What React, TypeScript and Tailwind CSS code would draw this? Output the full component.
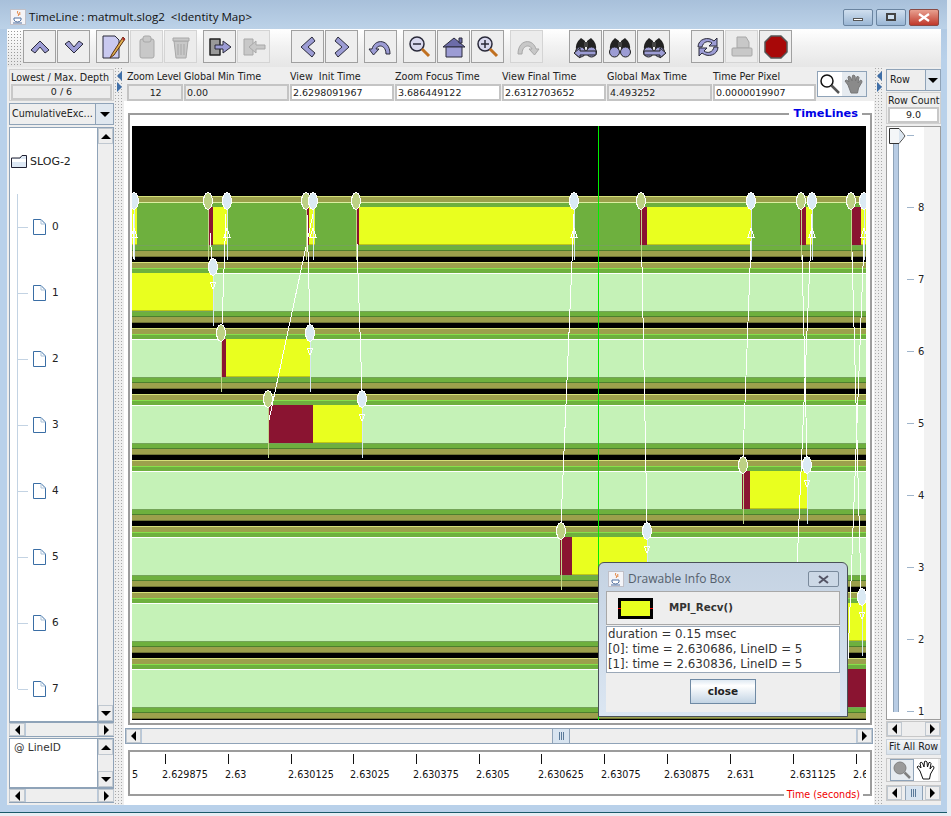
import type { ReactNode } from "react";

const ROW_TOPS = [196, 262, 328, 394, 460, 526, 592, 658];
const RED = "#8a1431";
const YELLOW = "#e9ff1f";

type Seg = { x: number; w: number; c: string };
const segs: Seg[][] = [
  [
    { x: 132, w: 5, c: YELLOW },
    { x: 209, w: 4, c: RED },
    { x: 213, w: 15, c: YELLOW },
    { x: 307, w: 2, c: RED },
    { x: 309, w: 6, c: YELLOW },
    { x: 357, w: 2, c: RED },
    { x: 359, w: 215, c: YELLOW },
    { x: 640, w: 7, c: RED },
    { x: 647, w: 105, c: YELLOW },
    { x: 800, w: 6, c: RED },
    { x: 806, w: 6, c: YELLOW },
    { x: 851, w: 10, c: RED },
    { x: 861, w: 5, c: YELLOW },
  ],
  [{ x: 132, w: 81, c: YELLOW }],
  [
    { x: 221, w: 5, c: RED },
    { x: 226, w: 85, c: YELLOW },
  ],
  [
    { x: 269, w: 44, c: RED },
    { x: 313, w: 49, c: YELLOW },
  ],
  [
    { x: 742, w: 8, c: RED },
    { x: 750, w: 57, c: YELLOW },
  ],
  [
    { x: 560, w: 12, c: RED },
    { x: 572, w: 76, c: YELLOW },
  ],
  [{ x: 848, w: 18, c: YELLOW }],
  [{ x: 848, w: 18, c: RED }],
];

// [row, x, is start (olive) balloon]
const balloons: [number, number, boolean][] = [
  [0, 134, false],
  [0, 208, true],
  [0, 227, false],
  [0, 306, true],
  [0, 313, false],
  [0, 356, true],
  [0, 574, false],
  [0, 641, true],
  [0, 751, false],
  [0, 801, true],
  [0, 812, false],
  [0, 851, true],
  [0, 864, false],
  [1, 213, false],
  [2, 221, true],
  [2, 310, false],
  [3, 268, true],
  [3, 362, false],
  [4, 743, true],
  [4, 807, false],
  [5, 561, true],
  [5, 647, false],
  [6, 862, false],
];

const messages: [number, number, number, number][] = [
  [133, 214, 133, 259],
  [210, 233, 212, 260],
  [226, 214, 222, 325],
  [307, 214, 310, 325],
  [313, 214, 269, 420],
  [356, 214, 362, 391],
  [574, 214, 561, 523],
  [641, 214, 647, 523],
  [752, 214, 743, 457],
  [801, 214, 807, 457],
  [812, 214, 796, 590],
  [851, 214, 861, 590],
  [865, 214, 848, 660],
];

const ticks = [
  [165, "2.629875"],
  [228, "2.63"],
  [291, "2.630125"],
  [353, "2.63025"],
  [416, "2.630375"],
  [479, "2.6305"],
  [541, "2.630625"],
  [604, "2.63075"],
  [667, "2.630875"],
  [730, "2.631"],
  [793, "2.631125"],
  [856, "2.63"],
] as const;

function Timeline() {
  return (
    <svg width={734} height={594} viewBox="132 126 734 594" className="block" shapeRendering="crispEdges">
      <rect x={132} y={126} width={734} height={594} fill="#000" />
      {ROW_TOPS.map((t, i) => (
        <g key={t}>
          <rect x={132} y={t} width={734} height={1} fill="#d5e07a" />
          <rect x={132} y={t + 1} width={734} height={5} fill="#9ca04c" />
          <rect x={132} y={t + 6} width={734} height={1} fill={i === 0 ? "#dcefa0" : "#86e04a"} />
          <rect x={132} y={t + 7} width={734} height={47} fill="#6eb03e" />
          {i > 0 && <rect x={132} y={t + 11} width={734} height={1} fill="#fff" />}
          {i > 0 && <rect x={132} y={t + 12} width={734} height={37} fill="#c5f2b7" />}
          <rect x={132} y={t + 49} width={734} height={1} fill="#74a458" />
          <rect x={132} y={t + 54} width={734} height={1} fill="#4d7f2e" />
          <rect x={132} y={t + 55} width={734} height={5} fill="#9ca04c" />
          <rect x={132} y={t + 60} width={734} height={1} fill="#6f7436" />
          {segs[i].map((s) => (
            <g key={s.x}>
              <rect x={s.x} y={t + 11} width={s.w} height={38} fill={s.c} />
              {s.c === YELLOW && <rect x={s.x} y={t + 48} width={s.w} height={1} fill="#bcc814" />}
            </g>
          ))}
        </g>
      ))}
      {messages.map(([x1, y1, x2, y2]) => (
        <line key={`${x1}-${y1}`} x1={x1} y1={y1} x2={x2} y2={y2} stroke="#fff" strokeWidth={1} />
      ))}
      {balloons.map(([row, x, olive]) => {
        const t = ROW_TOPS[row];
        const up = row === 0;
        return (
          <g key={`${row}-${x}`}>
            <line x1={x} y1={t + 12} x2={x} y2={t + 64} stroke={olive ? "#c3d68c" : "#d6e8f2"} strokeWidth={1} />
            <ellipse cx={x} cy={t + 5} rx={4.4} ry={8.4} fill={olive ? "#bdd184" : "#dbeaf4"} stroke="#fff" strokeWidth={1} />
            {!olive &&
              (up ? (
                <polygon points={`${x},${t + 32} ${x - 3},${t + 41} ${x + 3},${t + 41}`} fill="none" stroke="#fff" strokeWidth={1} />
              ) : (
                <polygon points={`${x - 3},${t + 20} ${x + 3},${t + 20} ${x},${t + 27}`} fill="none" stroke="#fff" strokeWidth={1} />
              ))}
          </g>
        );
      })}
      <rect x={598} y={126} width={1} height={594} fill="#00ee00" />
    </svg>
  );
}

function Tri({ dir, className = "fill-black" }: { dir: "up" | "down" | "left" | "right"; className?: string }) {
  const pts = {
    up: "0,6 5,1 10,6",
    down: "0,1 5,6 10,1",
    left: "6,0 1,5 6,10",
    right: "1,0 6,5 1,10",
  }[dir];
  const horizontal = dir === "left" || dir === "right";
  return (
    <svg width={horizontal ? 7 : 10} height={horizontal ? 10 : 7} viewBox={horizontal ? "0 0 7 10" : "0 0 10 7"} className={className}>
      <polygon points={pts} />
    </svg>
  );
}

function ArrowBtn({ dir, className = "" }: { dir: "up" | "down" | "left" | "right"; className?: string }) {
  return (
    <div className={`flex shrink-0 items-center justify-center border border-[#c0c8d0] bg-[#eeeeee] ${className}`}>
      <Tri dir={dir} />
    </div>
  );
}

function HScroll({ className = "" }: { className?: string }) {
  return (
    <div className={`flex h-[15px] shrink-0 border-y border-[#8fa3b8] bg-[#eeeeee] ${className}`}>
      <ArrowBtn dir="left" className="w-[16px]" />
      <div className="flex-1 border-x border-[#b8c8da] bg-[#eeeeee]" />
      <ArrowBtn dir="right" className="w-[16px]" />
    </div>
  );
}

function VScroll({ className = "" }: { className?: string }) {
  return (
    <div className={`flex w-[16px] shrink-0 flex-col border-l border-[#8fa3b8] bg-[#eeeeee] ${className}`}>
      <ArrowBtn dir="up" className="h-[16px]" />
      <div className="flex-1" />
      <ArrowBtn dir="down" className="h-[16px]" />
    </div>
  );
}

const Splitter = ({ children }: { children?: ReactNode }) => (
  <div className="relative w-[10px] shrink-0 bg-[radial-gradient(circle,#a8a8a8_0.6px,transparent_0.9px)] bg-[length:3px_3px]">
    {children}
  </div>
);

function Field({ label, value, w, editable }: { label: string; value: string; w: string; editable?: boolean }) {
  return (
    <div className={`flex shrink-0 flex-col ${w}`}>
      <div className="h-[15px] whitespace-pre text-left text-[9.6px] leading-[16px] text-[#222]">{label}</div>
      <div className={`h-[17px] border-2 border-[#c4c4c4] pl-[1px] text-[9.5px] leading-[13px] text-[#222] ${editable ? "bg-white" : "bg-[#ececec]"}`}>
        {value}
      </div>
    </div>
  );
}

function ToolBtn({ children, off }: { children: ReactNode; off?: boolean }) {
  return (
    <div className={`flex h-[33px] w-[33px] shrink-0 items-center justify-center border ${off ? "border-[#d4d4d4] bg-[#ececec]" : "border-[#a0a0a0] bg-[#eeeeee]"}`}>
      <svg width={26} height={26} viewBox="0 0 26 26" strokeLinejoin="round">
        {children}
      </svg>
    </div>
  );
}

const INK = "#2a2a3a";
const LAV = "#9c9cd4";
const G1 = "#c8c8c8";
const G2 = "#a8a8a8";

function Binocular({ arrow }: { arrow?: "left" | "right" }) {
  return (
    <>
      <path d="M8 4 L12 7 V16 H3 Q2 9 8 4Z M18 4 L14 7 V16 H23 Q24 9 18 4Z" fill="#222" />
      <rect x={11} y={8} width={4} height={5} fill="#444" />
      <circle cx={7.5} cy={18} r={5} fill={LAV} stroke="#222" strokeWidth={1} />
      <circle cx={18.5} cy={18} r={5} fill={LAV} stroke="#222" strokeWidth={1} />
      {arrow === "left" && <path d="M1 19 L7 14 V17 H23 V21 H7 V24Z" fill={LAV} stroke="#222" strokeWidth={1} />}
      {arrow === "right" && <path d="M25 19 L19 14 V17 H3 V21 H19 V24Z" fill={LAV} stroke="#222" strokeWidth={1} />}
    </>
  );
}

function Toolbar() {
  return (
    <div className="flex h-[38px] shrink-0 items-start bg-[linear-gradient(#ffffff,#f2f2f2_45%,#e6e6e6)] pr-[4px] pt-[1px]">
      <div className="h-full w-[16px] shrink-0 bg-[radial-gradient(circle,#9a9a9a_0.6px,transparent_0.9px)] bg-[length:3px_3px]" />
      <div className="flex gap-[1px]">
        <ToolBtn><path d="M4 16 L13 7 L22 16 L18 19 L13 13 L8 19Z" fill={LAV} stroke={INK} /></ToolBtn>
        <ToolBtn><path d="M4 10 L8 7 L13 13 L18 7 L22 10 L13 19Z" fill={LAV} stroke={INK} /></ToolBtn>
      </div>
      <div className="ml-[6px] flex gap-[1px]">
        <ToolBtn>
          <path d="M3 2 H15 L19 6 V24 H3Z" fill="#c9c9f0" stroke={INK} />
          <path d="M23 3 L12 20 L10 24 L14 21 L25 5Z" fill="#e0b050" stroke="#5a3010" />
          <path d="M23 3 L25 5 L24 7 L22 5Z" fill="#b03030" />
        </ToolBtn>
        <ToolBtn off>
          <rect x={6} y={5} width={14} height={19} rx={2} fill={G1} stroke={G2} />
          <rect x={9} y={2} width={8} height={6} rx={2} fill={G1} stroke={G2} />
        </ToolBtn>
        <ToolBtn off>
          <path d="M6 7 H20 L18 24 H8Z" fill={G1} stroke={G2} />
          <rect x={5} y={4} width={16} height={3} fill={G1} stroke={G2} />
          <path d="M10 10 V21 M13 10 V21 M16 10 V21" stroke={G2} />
        </ToolBtn>
      </div>
      <div className="ml-[6px] flex gap-[1px]">
        <ToolBtn>
          <path d="M3 5 H13 V21 H3Z" fill="#999" stroke="#222" strokeWidth={1.5} />
          <path d="M8 11 H16 V7 L24 13 L16 19 V15 H8Z" fill={LAV} stroke={INK} />
        </ToolBtn>
        <ToolBtn off>
          <path d="M3 5 H12 V21 H3Z" fill={G1} stroke={G2} />
          <path d="M24 11 H15 V7 L8 13 L15 19 V15 H24Z" fill={G1} stroke={G2} />
        </ToolBtn>
      </div>
      <div className="ml-[21px] flex gap-[1px]">
        <ToolBtn><path d="M17 3 L20 7 L13 13 L20 19 L17 23 L6 13Z" fill={LAV} stroke={INK} /></ToolBtn>
        <ToolBtn><path d="M9 3 L6 7 L13 13 L6 19 L9 23 L20 13Z" fill={LAV} stroke={INK} /></ToolBtn>
      </div>
      <div className="ml-[6px]">
        <ToolBtn>
          <path d="M22 20 H18 C18 11 10 10 8 15 H11 L5.5 21 L1 15 H4 C7 4 22 5 22 20Z" fill={LAV} stroke={INK} />
        </ToolBtn>
      </div>
      <div className="ml-[6px] flex gap-[1px]">
        <ToolBtn>
          <circle cx={10} cy={10} r={7} fill="#d8d8ee" stroke={INK} strokeWidth={1.5} />
          <path d="M6 10 H14" stroke={INK} strokeWidth={1.5} />
          <path d="M15 15 L22 22" stroke="#c07020" strokeWidth={3} />
        </ToolBtn>
        <ToolBtn>
          <path d="M2 13 L13 4 L24 13Z" fill="#6c6ca8" stroke={INK} />
          <rect x={18} y={4} width={3} height={5} fill="#6c6ca8" stroke={INK} />
          <rect x={5} y={13} width={16} height={10} fill={LAV} stroke={INK} />
        </ToolBtn>
        <ToolBtn>
          <circle cx={10} cy={10} r={7} fill="#d8d8ee" stroke={INK} strokeWidth={1.5} />
          <path d="M6 10 H14 M10 6 V14" stroke={INK} strokeWidth={1.5} />
          <path d="M15 15 L22 22" stroke="#c07020" strokeWidth={3} />
        </ToolBtn>
      </div>
      <div className="ml-[6px]">
        <ToolBtn off>
          <path d="M4 20 H8 C8 11 16 10 18 15 H15 L20.5 21 L25 15 H22 C19 4 4 5 4 20Z" fill={G1} stroke={G2} />
        </ToolBtn>
      </div>
      <div className="ml-[26px] flex gap-[1px]">
        <ToolBtn><Binocular arrow="left" /></ToolBtn>
        <ToolBtn><Binocular /></ToolBtn>
        <ToolBtn><Binocular arrow="right" /></ToolBtn>
      </div>
      <div className="ml-[21px] flex gap-[1px]">
        <ToolBtn>
          <path d="M3 13 C3 5 13 2 19 7 L22 4 V12 H14 L17 9 C13 6 8 8 7 13Z" fill={LAV} stroke={INK} />
          <path d="M23 13 C23 21 13 24 7 19 L4 22 V14 H12 L9 17 C13 20 18 18 19 13Z" fill={LAV} stroke={INK} />
        </ToolBtn>
        <ToolBtn off>
          <path d="M8 3 H17 L20 8 V14 H8Z" fill={G1} stroke={G2} />
          <rect x={3} y={14} width={20} height={8} rx={1} fill={G1} stroke={G2} />
        </ToolBtn>
        <ToolBtn>
          <polygon points="8,2 18,2 24,8 24,18 18,24 8,24 2,18 2,8" fill="#a80808" stroke="#555" strokeWidth={1.5} />
        </ToolBtn>
      </div>
    </div>
  );
}

function FileIcon() {
  return (
    <svg width={13} height={16} viewBox="0 0 13 16" className="shrink-0">
      <path d="M0.5 0.5 H8 L12.5 5 V15.5 H0.5Z" fill="#fff" stroke="#3a6ea5" />
      <path d="M8 0.5 V5 H12.5" fill="none" stroke="#a8c0d8" />
    </svg>
  );
}

function LeftColumn() {
  return (
    <div className="flex w-[107px] shrink-0 flex-col pl-[2px] pt-[2px]">
      <div className="h-[32px] border border-[#d0d0d0] px-[1px]">
        <div className="h-[14px] whitespace-nowrap text-[9.6px] leading-[15px] text-[#222]">Lowest / Max. Depth</div>
        <div className="h-[16px] border-2 border-[#c8c8c8] bg-[#ececec] text-center text-[9.5px] leading-[12px] text-[#222]">0 / 6</div>
      </div>
      <div className="mt-[2px] flex h-[22px] border border-[#8fa3b8]">
        <div className="flex-1 bg-[#eeeeee] pl-[2px] text-[9.6px] leading-[20px] text-[#222]">CumulativeExc...</div>
        <div className="flex w-[18px] items-center justify-center border-l border-[#8fa3b8] bg-[#dfe7ef]"><Tri dir="down" /></div>
      </div>
      <div className="mt-[2px] flex h-[595px] border border-[#8fa3b8] bg-white">
        <div className="min-w-0 flex-1">
          <div className="flex h-[66px] items-center gap-[3px] pl-[1px]">
            <svg width={16} height={13} viewBox="0 0 16 13" className="shrink-0">
              <path d="M0.5 3 H9 L11 0.5 H15.5 V12.5 H0.5Z" fill="#dde8f4" stroke="#223" />
              <rect x={1} y={4} width={14} height={3} fill="#fff" />
            </svg>
            <span className="text-[11px] leading-[13px] text-[#222]">SLOG-2</span>
          </div>
          <div className="ml-[7px] h-[495px] border-l border-[#c3d3e3]">
            {[0, 1, 2, 3, 4, 5, 6, 7].map((n) => (
              <div key={n} className="flex h-[66px] items-center">
                <div className="w-[10px] border-t border-[#c3d3e3]" />
                <div className="ml-[5px]"><FileIcon /></div>
                <span className="ml-[6px] text-[10.5px] text-[#222]">{n}</span>
              </div>
            ))}
          </div>
        </div>
        <VScroll />
      </div>
      <HScroll />
      <div className="mt-[1px] flex h-[50px] border border-[#8fa3b8] bg-white">
        <div className="min-w-0 flex-1 pl-[4px] pt-[1px] text-[10.5px] text-[#333]">@ LineID</div>
        <VScroll />
      </div>
      <HScroll />
    </div>
  );
}

function ToggleGlass() {
  return (
    <svg width={22} height={22} viewBox="0 0 22 22">
      <circle cx={8} cy={8} r={6} fill="#fff" stroke="#111" strokeWidth={1.5} />
      <path d="M12.5 12.5 L20 20" stroke="#555" strokeWidth={2.5} />
    </svg>
  );
}

function Hand({ fill, stroke }: { fill: string; stroke: string }) {
  return (
    <svg width={22} height={22} viewBox="0 0 22 22">
      <path
        d="M5 12 L2 8 Q3 6 5 8 L6 9 L5 4 Q6 2.5 7.5 4 L9 8 L9.5 2.5 Q11 1.5 12 3 L12.5 8 L14 3.5 Q15.5 3 16 4.5 L15 10 L17.5 7 Q19 7 19 9 L15.5 15 L14.5 20 H8 Z"
        fill={fill}
        stroke={stroke}
        strokeWidth={1}
      />
    </svg>
  );
}

function MiddleColumn() {
  return (
    <div className="flex w-[750px] shrink-0 flex-col">
      <div className="flex h-[34px] items-start gap-[1px] pl-[3px] pt-[2px]">
        <Field label="Zoom Level" value="12" w="w-[56px] text-center tracking-[-0.2px]" />
        <Field label="Global Min Time" value="0.00" w="w-[105px]" />
        <Field label="View  Init Time" value="2.6298091967" w="w-[104px]" editable />
        <Field label="Zoom Focus Time" value="3.686449122" w="w-[106px]" editable />
        <Field label="View Final Time" value="2.6312703652" w="w-[104px]" editable />
        <Field label="Global Max Time" value="4.493252" w="w-[105px]" />
        <Field label="Time Per Pixel" value="0.0000019907" w="w-[103px]" editable />
        <div className="mt-[2px] flex h-[26px] w-[50px] shrink-0 border border-[#8fa3b8]">
          <div className="flex flex-1 items-center justify-center bg-white"><ToggleGlass /></div>
          <div className="flex flex-1 items-center justify-center bg-[#e6ebf0]"><Hand fill="#8a8a8a" stroke="#777" /></div>
        </div>
      </div>
      <div className="flex flex-1 flex-col bg-white pl-[1px]">
        <div className="relative ml-[3px] mt-[12px] h-[612px] w-[744px] border-2 border-[#9c9c9c] pl-[2px] pt-[11px]">
          <Timeline />
          <div className="absolute -top-[9px] right-[8px] bg-white px-[4px] text-[11.3px] font-bold leading-[16px] text-[#0000e6]">TimeLines</div>
        </div>
        <div className="mt-[3px] flex h-[16px] w-[748px] border border-[#8fa3b8] bg-[#eeeeee]">
          <ArrowBtn dir="left" className="w-[15px]" />
          <div className="flex flex-1 border-x border-[#b8c8da] pl-[410px]">
            <div className="flex h-full w-[18px] items-center justify-center gap-[1px] border-x border-[#8fa3b8] bg-[#d8e4f0]">
              <span className="h-[8px] w-px bg-[#5a7a9a]" />
              <span className="h-[8px] w-px bg-[#5a7a9a]" />
              <span className="h-[8px] w-px bg-[#5a7a9a]" />
            </div>
          </div>
          <ArrowBtn dir="right" className="w-[15px]" />
        </div>
        <div className="relative ml-[3px] mt-[6px] h-[46px] w-[744px] border-2 border-[#9c9c9c]">
          <svg width={734} height={42} viewBox="132 752 734 42" className="ml-[2px] block">
            <text x={132} y={778} fontSize={9.6} fill="#111">5</text>
            {ticks.map(([x, label]) => (
              <g key={x}>
                <rect x={x} y={754} width={1} height={10} fill="#111" />
                <text x={x - 3} y={778} fontSize={9.6} fill="#111">{label}</text>
              </g>
            ))}
          </svg>
          <div className="absolute -bottom-[8px] right-[7px] bg-white px-[3px] text-[9.6px] leading-[15px] text-[#f00000]">Time (seconds)</div>
        </div>
      </div>
    </div>
  );
}

function RightColumn() {
  const labels = ["", "8", "7", "6", "5", "4", "3", "2", "1"];
  return (
    <div className="flex w-[57px] shrink-0 flex-col pl-[2px] pt-[2px]">
      <div className="flex h-[22px] border border-[#8fa3b8]">
        <div className="flex-1 bg-[#eeeeee] pl-[3px] text-[9.6px] leading-[20px] text-[#222]">Row</div>
        <div className="flex w-[15px] items-center justify-center border-l border-[#8fa3b8] bg-[#dfe7ef]"><Tri dir="down" /></div>
      </div>
      <div className="mt-[1px] h-[32px] border border-[#d0d0d0] px-[1px]">
        <div className="h-[14px] whitespace-nowrap text-[9.6px] leading-[15px] text-[#222]">Row Count</div>
        <div className="h-[16px] border-2 border-[#c8c8c8] bg-white text-center text-[9.5px] leading-[12px] text-[#222]">9.0</div>
      </div>
      <div className="relative mt-[2px] flex h-[594px] border border-[#9c9c9c] bg-[linear-gradient(to_right,#ffffff_37px,#f2f2f2_37px)]">
        <div className="ml-[6px] mt-[9px] mb-[7px] w-[6px] border-x border-[#8fa3b8] bg-[#b8cce4]" />
        <div className="ml-[8px] flex h-full flex-1 flex-col justify-between pb-[8px] pt-[8px]">
          {labels.map((l, i) => (
            <div key={i} className="flex h-0 items-center gap-[4px]">
              <span className="h-px w-[7px] bg-[#9fb4ca]" />
              <span className="text-[10px] text-[#222]">{l}</span>
            </div>
          ))}
        </div>
        <svg width={17} height={16} viewBox="0 0 17 16" className="absolute left-[2px] top-[1px]">
          <path d="M0.5 0.5 H10 L16 8 L10 15.5 H0.5Z" fill="#f4f6f8" stroke="#333" />
          <path d="M10 1 L15.5 8 L10 15Z" fill="#dce6f0" />
        </svg>
      </div>
      <div className="mt-[1px] flex h-[16px] border border-[#c8c8c8] bg-[#eeeeee]">
        <ArrowBtn dir="left" className="w-[15px]" />
        <div className="flex-1" />
        <ArrowBtn dir="right" className="w-[15px]" />
      </div>
      <div className="mt-[2px] h-[16px] overflow-hidden whitespace-nowrap border border-[#c8d0d8] bg-[linear-gradient(#f4f6f8,#d8e2ec)] pl-[2px] text-[9.6px] leading-[14px] text-[#222]">Fit All Row</div>
      <div className="mt-[3px] flex h-[24px] justify-center border border-[#c8c8c8]">
        <div className="flex w-[24px] items-center justify-center border border-[#8fa3b8] bg-[#e6ebf0]">
          <svg width={20} height={20} viewBox="0 0 20 20">
            <circle cx={8} cy={8} r={6} fill="#9a9a9a" stroke="#808080" />
            <path d="M12.5 12.5 L18 18" stroke="#808080" strokeWidth={2.5} />
          </svg>
        </div>
        <div className="flex w-[24px] items-center justify-center bg-white"><Hand fill="#fff" stroke="#111" /></div>
      </div>
      <div className="mt-[3px] flex h-[16px] border border-[#c8c8c8] bg-[#eeeeee]">
        <ArrowBtn dir="left" className="w-[15px]" />
        <div className="flex flex-1 justify-center">
          <div className="flex h-full w-[18px] items-center justify-center gap-[1px] border-x border-[#8fa3b8] bg-[#d8e4f0]">
            <span className="h-[8px] w-px bg-[#5a7a9a]" />
            <span className="h-[8px] w-px bg-[#5a7a9a]" />
            <span className="h-[8px] w-px bg-[#5a7a9a]" />
          </div>
        </div>
        <ArrowBtn dir="right" className="w-[15px]" />
      </div>
    </div>
  );
}

function CoffeeIcon() {
  return (
    <svg width={16} height={16} viewBox="0 0 16 16" className="shrink-0">
      <rect x={0.5} y={0.5} width={15} height={15} fill="#f4f4f8" stroke="#c0c0c8" />
      <path d="M8 2 C6 4 10 5 8 7 M10 3 C9 4 10.5 5 9.5 6" stroke="#e07020" fill="none" />
      <path d="M4 9 H11 V11 Q10 13 7.5 13 Q5 13 4 11Z" fill="#fff" stroke="#5070a0" />
      <path d="M3 14 H12" stroke="#5070a0" />
    </svg>
  );
}

function InfoBox() {
  return (
    <div className="absolute left-[598px] top-[562px] flex h-[155px] w-[250px] flex-col rounded-t-[6px] border border-[#4a5058] bg-[linear-gradient(#c4d2e2,#dbe6f2)] px-[7px]">
      <div className="flex h-[28px] shrink-0 items-center gap-[4px] pl-[2px] pt-[4px]">
        <CoffeeIcon />
        <span className="flex-1 font-['Open_Sans',sans-serif] text-[12px] text-[#55606c]">Drawable Info Box</span>
        <div className="mr-[1px] flex h-[16px] w-[31px] items-center justify-center rounded-[2px] border border-[#7a8a9c] bg-[#ccd8e6]">
          <svg width={11} height={9} viewBox="0 0 11 9"><path d="M1 1 L10 8 M10 1 L1 8" stroke="#556" strokeWidth={2} /></svg>
        </div>
      </div>
      <div className="flex flex-1 flex-col bg-[#eeeeee]">
        <div className="flex h-[34px] shrink-0 items-center border border-[#a8a8a8] pl-[11px]">
          <div className="relative h-[21px] w-[35px] border-[3px] border-black bg-[#e9ff1f]">
            <span className="absolute -left-[3px] top-[7px] h-px w-[3px] bg-[#f00000]" />
            <span className="absolute -right-[3px] top-[7px] h-px w-[3px] bg-[#f00000]" />
          </div>
          <span className="ml-[16px] text-[10.3px] font-bold text-[#333]">MPI_Recv()</span>
        </div>
        <div className="mt-[1px] h-[47px] shrink-0 border border-[#9aa8b8] bg-white pl-[1px] text-[11.8px] leading-[15px] text-[#333]">
          <div>duration = 0.15 msec</div>
          <div>[0]: time = 2.630686, LineID = 5</div>
          <div>[1]: time = 2.630836, LineID = 5</div>
        </div>
        <div className="flex flex-1 items-start justify-center pt-[6px]">
          <div className="h-[25px] w-[66px] border border-[#6f8aa4] bg-[linear-gradient(#dfe9f2,#ffffff_25%,#c3d4e4)] text-center text-[10.5px] font-bold leading-[23px] text-[#222]">close</div>
        </div>
      </div>
      <div className="h-[4px] shrink-0" />
    </div>
  );
}

export default function App() {
  return (
    <div className="relative h-[816px] w-[951px] overflow-hidden bg-[#e8eef4] font-['DejaVu_Sans',sans-serif]">
      <div className="flex h-[813px] w-[947px] flex-col rounded-t-[7px] border-b border-[#1a5a6a] bg-[linear-gradient(#a9c3de,#b9d1ea_60px)]">
        <div className="flex h-[29px] shrink-0 items-center bg-[linear-gradient(#a8c0da,#bcd2e8)] pl-[10px] pt-[5px]">
          <CoffeeIcon />
          <span className="ml-[3px] flex-1 whitespace-pre font-['Open_Sans',sans-serif] text-[11.6px] text-[#111]">TimeLine : matmult.slog2  &lt;Identity Map&gt;</span>
          <div className="mr-[8px] flex gap-[3px]">
            <div className="flex h-[17px] w-[30px] items-end justify-center rounded-[2px] border border-[#6a84a0] bg-[linear-gradient(#d0dfef,#9ab6d4)] pb-[4px]"><span className="h-[3px] w-[10px] border border-[#555] bg-white" /></div>
            <div className="flex h-[17px] w-[30px] items-center justify-center rounded-[2px] border border-[#6a84a0] bg-[linear-gradient(#d0dfef,#9ab6d4)]"><span className="h-[8px] w-[10px] border-2 border-[#444] bg-[#cfe0f0]" /></div>
            <div className="flex h-[17px] w-[30px] items-center justify-center rounded-[2px] border border-[#8a4a44] bg-[linear-gradient(#e8a090,#c0392b)]">
              <svg width={12} height={9} viewBox="0 0 12 9"><path d="M1 1 L11 8 M11 1 L1 8" stroke="#fff" strokeWidth={2.2} /></svg>
            </div>
          </div>
        </div>
        <div className="ml-[7px] flex h-[776px] w-[934px] flex-col bg-[#eeeeee]">
          <Toolbar />
          <div className="flex flex-1">
            <LeftColumn />
            <Splitter>
              <div className="absolute left-[2px] top-[4px] flex flex-col gap-[1px]">
                <Tri dir="left" className="fill-[#3f6fa8]" />
                <Tri dir="right" className="fill-[#3f6fa8]" />
              </div>
            </Splitter>
            <MiddleColumn />
            <Splitter>
              <div className="absolute left-[2px] top-[4px] flex flex-col gap-[1px]">
                <Tri dir="left" className="fill-[#3f6fa8]" />
                <Tri dir="right" className="fill-[#3f6fa8]" />
              </div>
            </Splitter>
            <RightColumn />
          </div>
        </div>
      </div>
      <InfoBox />
    </div>
  );
}
